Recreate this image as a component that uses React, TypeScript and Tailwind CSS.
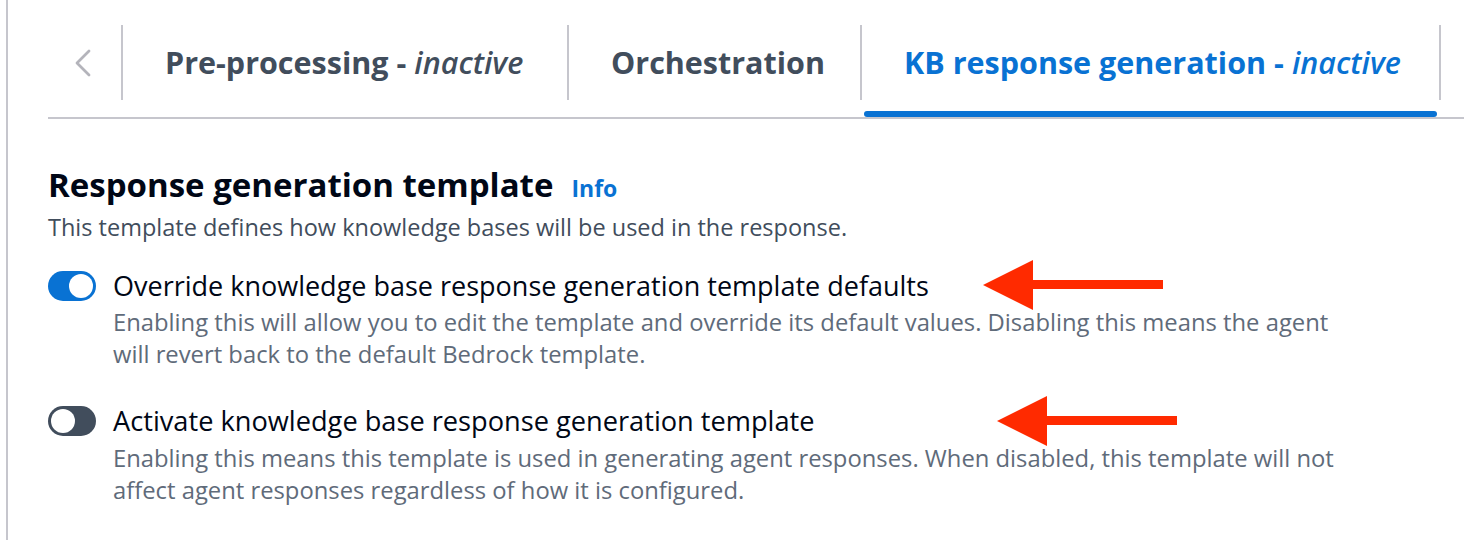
import { ChevronLeft } from 'lucide-react'

const tabs = [
  { label: 'Pre-processing', status: 'inactive', active: false, width: 'w-[446px]' },
  { label: 'Orchestration', status: null, active: false, width: 'w-[293px]' },
  { label: 'KB response generation', status: 'inactive', active: true, width: 'w-[581px]' },
]

function Toggle({ on }: { on: boolean }) {
  return (
    <div
      className={
        'w-[48px] h-[30px] rounded-full flex items-center px-[3px] shrink-0 ' +
        (on ? 'bg-[#0972d3] justify-end' : 'bg-[#414d5c] justify-start')
      }
    >
      <div className="w-[24px] h-[24px] rounded-full bg-white" />
    </div>
  )
}

function Arrow({ top, left, length }: { top: number; left: number; length: number }) {
  // red annotation arrow, pointing left
  return (
    <svg
      className="absolute"
      style={{ top, left }}
      width={length}
      height={52}
      viewBox={`0 0 ${length} 52`}
    >
      <polygon points={`0,26 50,1 50,51`} fill="#ff2a00" />
      <rect x={48} y={21} width={length - 48} height={9} fill="#ff2a00" />
    </svg>
  )
}

export default function App() {
  return (
    <div
      className="relative w-[1464px] h-[540px] bg-white pl-[6px] overflow-hidden"
      style={{ fontFamily: '"Open Sans", Roboto, sans-serif' }}
    >
      <div className="h-full border-l-[2px] border-[#c6c6cd] pl-[40px]">
        {/* Tabs */}
        <div className="flex items-start border-b-[2px] border-[#c6c6cd] pt-[25px]">
          <div className="w-[73px] h-[75px] flex items-center pl-[11px]">
            <ChevronLeft size={48} strokeWidth={1.4} className="text-[#b4b4bb]" />
          </div>
          {tabs.map((t, i) => (
            <div key={t.label} className={'flex flex-col ' + t.width}>
              <div
                className={
                  'h-[75px] flex items-center pl-[42px] border-l-[2px] border-[#c6c6cd] text-[30.5px] font-bold whitespace-nowrap ' +
                  (i === tabs.length - 1 ? 'border-r-[2px] ' : '') +
                  (t.active ? 'text-[#0972d3]' : 'text-[#414d5c]')
                }
              >
                {t.label}
                {t.status && (
                  <>
                    <span className="mx-[8px]">-</span>
                    <span className="italic font-semibold">{t.status}</span>
                  </>
                )}
              </div>
              <div
                className={
                  'h-[6px] mt-[11px] mx-[4px] rounded-full ' + (t.active ? 'bg-[#0972d3]' : 'bg-transparent')
                }
              />
            </div>
          ))}
        </div>

        {/* Section */}
        <div className="pt-[46px]">
          <div className="flex items-baseline gap-[18px]">
            <h2 className="text-[33px] leading-[40px] font-bold text-[#000716]">Response generation template</h2>
            <span className="text-[23px] font-bold text-[#0972d3]">Info</span>
          </div>
          <p className="text-[23.5px] leading-[30px] text-[#414d5c] mt-[6px]">
            This template defines how knowledge bases will be used in the response.
          </p>

          <div className="flex gap-[17px] mt-[26px]">
            <div className="pt-[3px]">
              <Toggle on />
            </div>
            <div>
              <div className="text-[27px] leading-[36px] text-[#000716]">
                Override knowledge base response generation template defaults
              </div>
              <p className="text-[23.8px] leading-[32px] text-[#5f6b7a] w-[1245px] mt-[2px]">
                Enabling this will allow you to edit the template and override its default values. Disabling this means the agent will revert back to the default Bedrock template.
              </p>
            </div>
          </div>

          <div className="flex gap-[17px] mt-[33px]">
            <div className="pt-[3px]">
              <Toggle on={false} />
            </div>
            <div>
              <div className="text-[27.2px] leading-[36px] text-[#000716]">
                Activate knowledge base response generation template
              </div>
              <p className="text-[23.8px] leading-[32px] text-[#5f6b7a] w-[1245px] mt-[3px]">
                Enabling this means this template is used in generating agent responses. When disabled, this template will not affect agent responses regardless of how it is configured.
              </p>
            </div>
          </div>
        </div>
      </div>

      <Arrow top={259} left={983} length={180} />
      <Arrow top={395} left={997} length={180} />
    </div>
  )
}
